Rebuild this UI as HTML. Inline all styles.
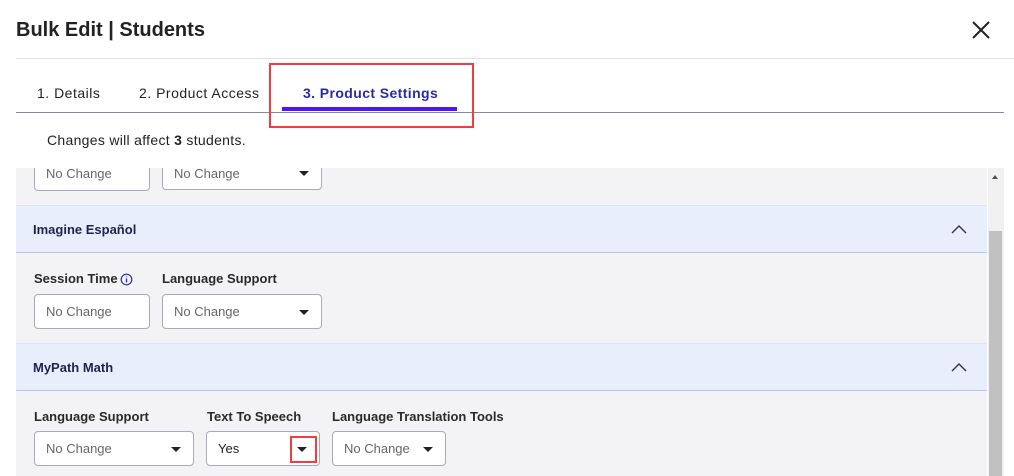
<!DOCTYPE html>
<html><head><style>
*{box-sizing:border-box;margin:0;padding:0}
body{width:1014px;height:476px;background:#fff;font-family:"Liberation Sans",sans-serif;position:relative;overflow:hidden;color:#222}
.a{position:absolute}
.inp{position:absolute;background:#fff;border:1px solid #a9a9b8;border-radius:4px;font-size:13px;color:#666;padding-left:11px;display:flex;align-items:center}
.car{position:absolute;right:12px;top:50%;margin-top:-2px;width:0;height:0;border-left:5px solid transparent;border-right:5px solid transparent;border-top:5px solid #222}
.lbl{position:absolute;font-size:13px;font-weight:bold;color:#2a2a2a}
.hdr{position:absolute;left:16px;width:971px;height:48px;background:#e8eefc;border-top:1px solid #dde3f3;border-bottom:1px solid #b8c6f2;font-size:13px;font-weight:bold;color:#1e2350;padding-left:17px;display:flex;align-items:center}
.tab{position:absolute;top:85px;font-size:14px;letter-spacing:0.5px;color:#222}
</style></head><body>
<div class="a" style="left:16px;top:19px;font-size:20px;font-weight:bold;color:#222">Bulk Edit | Students</div>
<svg class="a" style="left:971px;top:20px" width="20" height="20"><path d="M2 2L18 18M18 2L2 18" stroke="#222" stroke-width="2"/></svg>
<div class="a" style="left:16px;top:58px;width:998px;height:1px;background:#e2e2e2"></div>
<div class="a" style="left:16px;top:168px;width:971px;height:308px;background:#f3f3f6"></div>
<div class="a" style="left:988px;top:168px;width:16px;height:308px;background:#f1f1f1"></div>
<div class="a" style="left:989px;top:231px;width:13px;height:245px;background:#c1c1c1"></div>
<div class="a" style="left:992px;top:175px;width:0;height:0;border-left:3px solid transparent;border-right:3px solid transparent;border-bottom:4px solid #505050"></div>
<div class="inp" style="left:34px;top:156px;width:116px;height:35px">No Change</div>
<div class="inp" style="left:162px;top:156px;width:160px;height:34px">No Change<span class="car"></span></div>
<div class="a" style="left:16px;top:120px;width:971px;height:48px;background:#fff"></div>
<div class="tab" style="left:37px">1. Details</div>
<div class="tab" style="left:139px">2. Product Access</div>
<div class="tab" style="left:303px;font-weight:bold;color:#2b2ba0;letter-spacing:0.4px">3. Product Settings</div>
<div class="a" style="left:16px;top:112px;width:988px;height:1px;background:#8a86a0"></div>
<div class="a" style="left:282px;top:107px;width:175px;height:4px;background:#4f16f5"></div>
<div class="a" style="left:269px;top:63px;width:205px;height:65px;border:2px solid #f23c44"></div>
<div class="a" style="left:47px;top:132px;font-size:14px;color:#222;letter-spacing:0.3px">Changes will affect <b>3</b> students.</div>
<div class="hdr" style="top:205px">Imagine Español</div>
<svg class="a" style="left:950px;top:224px" width="18" height="12"><path d="M2 9L9 2L16 9" stroke="#333" stroke-width="1.4" fill="none"/></svg>
<div class="lbl" style="left:34px;top:271px">Session Time</div>
<svg class="a" style="left:120px;top:273px" width="13" height="13"><circle cx="6.5" cy="6.5" r="5.3" stroke="#2a2ab0" stroke-width="1.2" fill="none"/><path d="M6.5 5.5V9.5M6.5 3.5V4.3" stroke="#2a2ab0" stroke-width="1.3"/></svg>
<div class="lbl" style="left:162px;top:271px">Language Support</div>
<div class="inp" style="left:34px;top:294px;width:116px;height:35px">No Change</div>
<div class="inp" style="left:162px;top:294px;width:160px;height:35px">No Change<span class="car"></span></div>
<div class="hdr" style="top:343px">MyPath Math</div>
<svg class="a" style="left:950px;top:362px" width="18" height="12"><path d="M2 9L9 2L16 9" stroke="#333" stroke-width="1.4" fill="none"/></svg>
<div class="lbl" style="left:34px;top:409px">Language Support</div>
<div class="lbl" style="left:207px;top:409px">Text To Speech</div>
<div class="lbl" style="left:332px;top:409px">Language Translation Tools</div>
<div class="inp" style="left:34px;top:431px;width:160px;height:35px">No Change<span class="car"></span></div>
<div class="inp" style="left:206px;top:431px;width:114px;height:35px;color:#222">Yes<span class="car"></span></div>
<div class="a" style="left:290px;top:436px;width:27px;height:27px;border:2px solid #f23c44"></div>
<div class="inp" style="left:332px;top:431px;width:114px;height:35px">No Change<span class="car"></span></div>
</body></html>
